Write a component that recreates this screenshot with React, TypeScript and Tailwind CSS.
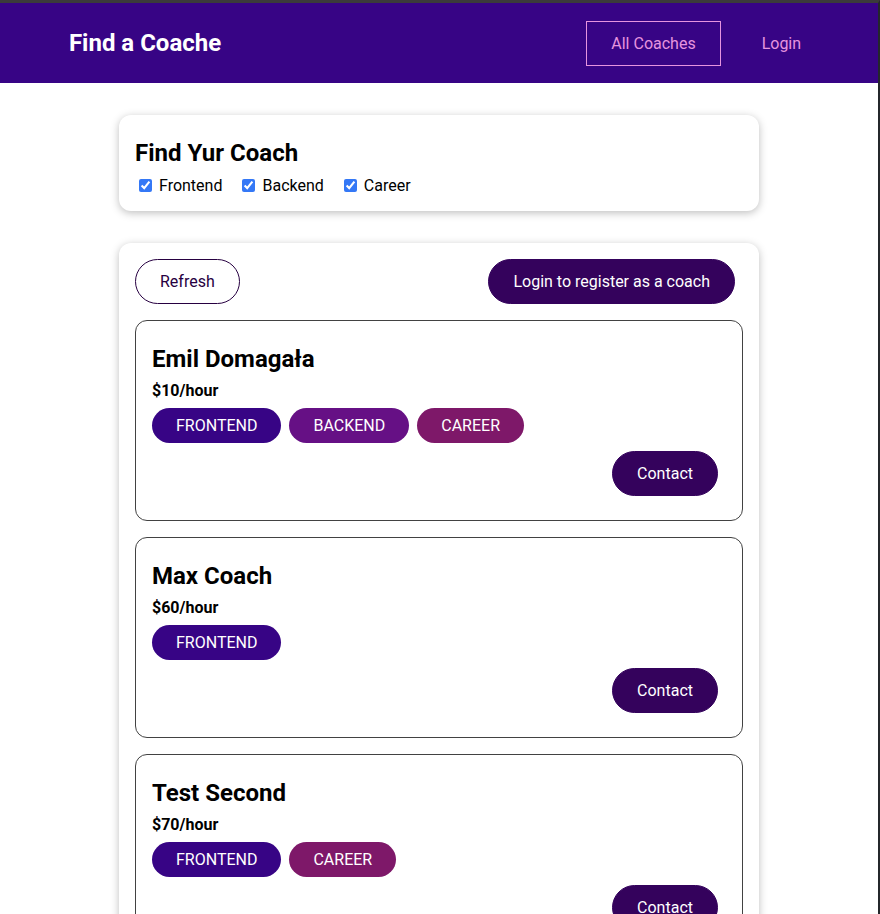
import { useState } from "react";
import type { ReactNode } from "react";

type Area = "frontend" | "backend" | "career";

interface Coach {
  name: string;
  rate: number;
  areas: Area[];
}

const coaches: Coach[] = [
  { name: "Emil Domagała", rate: 10, areas: ["frontend", "backend", "career"] },
  { name: "Max Coach", rate: 60, areas: ["frontend"] },
  { name: "Test Second", rate: 70, areas: ["frontend", "career"] },
];

const filters: { id: Area; label: string }[] = [
  { id: "frontend", label: "Frontend" },
  { id: "backend", label: "Backend" },
  { id: "career", label: "Career" },
];

const badgeColors: Record<Area, string> = {
  frontend: "bg-[#370485]",
  backend: "bg-[#661085]",
  career: "bg-[#7e1869]",
};

function Card({ children }: { children: ReactNode }) {
  return (
    <section className="mx-auto mt-8 w-full max-w-[640px] rounded-xl bg-white p-4 shadow-[0_2px_8px_rgba(0,0,0,0.26)]">
      {children}
    </section>
  );
}

function CoachItem({ coach }: { coach: Coach }) {
  return (
    <li className="rounded-xl border border-[#424242] px-4 py-6">
      <h3 className="text-2xl leading-7 font-bold">{coach.name}</h3>
      <h4 className="mt-2 leading-[19px] font-bold">${coach.rate}/hour</h4>
      <div className="mt-2 flex flex-wrap gap-2">
        {coach.areas.map((area) => (
          <span
            key={area}
            className={`rounded-full px-6 py-2 leading-[19px] text-white uppercase ${badgeColors[area]}`}
          >
            {area}
          </span>
        ))}
      </div>
      <div className="mt-2 flex justify-end pr-2">
        <a
          href="#contact"
          className="rounded-full border border-[#34025c] bg-[#34025c] px-6 py-3 leading-[19px] text-white"
        >
          Contact
        </a>
      </div>
    </li>
  );
}

export default function App() {
  const [active, setActive] = useState<Record<Area, boolean>>({
    frontend: true,
    backend: true,
    career: true,
  });

  const visible = coaches.filter((coach) => coach.areas.some((area) => active[area]));

  return (
    <div className="min-h-screen border-t-3 border-r-2 border-t-[#3b3b3b] border-r-[#24272b] bg-white font-['Roboto',sans-serif] text-base text-black">
      <header className="flex h-20 items-center bg-[#370485]">
        <div className="mx-auto flex w-[90%] items-center justify-between">
          <h1 className="px-6 text-2xl leading-7 font-bold text-white">
            <a href="#home" className="border border-transparent">
              Find a Coache
            </a>
          </h1>
          <nav className="flex gap-4 pr-2">
            <a
              href="#coaches"
              className="border border-[#e694df] px-6 py-3 leading-[19px] text-[#e694df]"
            >
              All Coaches
            </a>
            <a
              href="#login"
              className="border border-transparent px-6 py-3 leading-[19px] text-[#e694df]"
            >
              Login
            </a>
          </nav>
        </div>
      </header>

      <main className="px-4 pb-8">
        <Card>
          <h2 className="mt-2 text-2xl leading-7 font-bold">Find Yur Coach</h2>
          <div className="mt-[9px] flex flex-wrap gap-5 pl-1">
            {filters.map(({ id, label }) => (
              <div key={id} className="flex items-center gap-[7px] leading-[19px]">
                <input
                  type="checkbox"
                  id={id}
                  checked={active[id]}
                  onChange={() => setActive({ ...active, [id]: !active[id] })}
                  className="size-[13px] accent-[#3478f6]"
                />
                <label htmlFor={id}>{label}</label>
              </div>
            ))}
          </div>
        </Card>

        <Card>
          <div className="flex items-center justify-between pr-2">
            <button
              type="button"
              className="rounded-full border border-[#270041] px-6 py-3 leading-[19px] text-[#270041]"
            >
              Refresh
            </button>
            <a
              href="#register"
              className="rounded-full border border-[#34025c] bg-[#34025c] px-6 py-3 leading-[19px] text-white"
            >
              Login to register as a coach
            </a>
          </div>
          <ul className="mt-4 flex flex-col gap-4">
            {visible.map((coach) => (
              <CoachItem key={coach.name} coach={coach} />
            ))}
          </ul>
        </Card>
      </main>
    </div>
  );
}
